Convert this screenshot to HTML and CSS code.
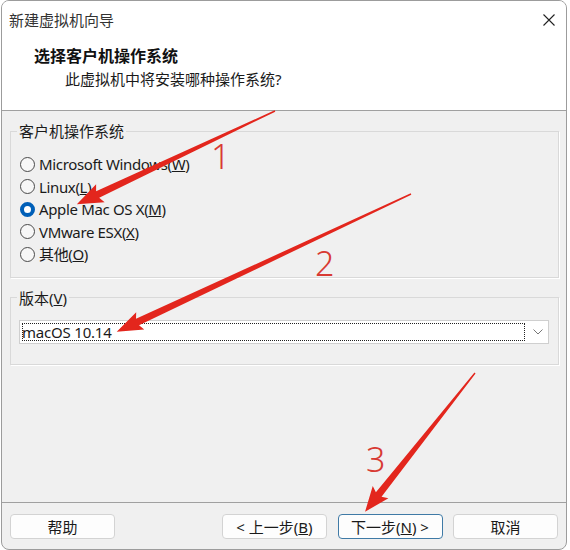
FILE: index.html
```html
<!DOCTYPE html>
<html lang="zh-CN">
<head>
  <meta charset="UTF-8" />
  <title>新建虚拟机向导</title>
  <link rel="stylesheet" href="styles.css">
</head>
<body>
  <div class="window">
    <div class="titlebar">
      <span class="title">新建虚拟机向导</span>
      <svg class="close" width="12" height="12" viewBox="0 0 12 12">
        <path d="M0.5 0.5 L11.5 11.5 M11.5 0.5 L0.5 11.5" stroke="#222" stroke-width="1.1" fill="none" />
      </svg>
    </div>

    <div class="header">
      <h1>选择客户机操作系统</h1>
      <p>此虚拟机中将安装哪种操作系统?</p>
    </div>

    <div class="content">
      <fieldset class="group">
        <legend>客户机操作系统</legend>
        <div class="radio"><span class="dot"></span>Microsoft Windows(<u>W</u>)</div>
        <div class="radio"><span class="dot"></span>Linux(<u>L</u>)</div>
        <div class="radio checked"><span class="dot"></span>Apple Mac OS X(<u>M</u>)</div>
        <div class="radio"><span class="dot"></span>VMware ESX(<u>X</u>)</div>
        <div class="radio"><span class="dot"></span>其他(<u>O</u>)</div>
      </fieldset>

      <fieldset class="group version">
        <legend>版本(<u>V</u>)</legend>
        <div class="combo">
          <span class="combo-value">macOS 10.14</span>
          <svg class="chevron" width="10" height="6" viewBox="0 0 10 6">
            <path d="M0.5 0.5 L5 5 L9.5 0.5" stroke="#777" stroke-width="1" fill="none" />
          </svg>
        </div>
      </fieldset>
    </div>

    <div class="footer">
      <button class="btn">帮助</button>
      <div class="nav">
        <button class="btn">&lt; 上一步(<u>B</u>)</button>
        <button class="btn default">下一步(<u>N</u>) &gt;</button>
        <button class="btn">取消</button>
      </div>
    </div>

    <!-- red annotation arrows drawn over the dialog -->
    <svg class="marks" width="570" height="550" viewBox="0 0 570 550">
      <g fill="#e3261d">
        <polygon transform="translate(275 111) rotate(154.8)" points="0,-0.7 196,-3.6 193,-10 219,0 193,10 196,3.6 0,0.7" />
        <polygon transform="translate(411 194) rotate(154.9)" points="0,-0.7 302,-3.6 299,-9.5 325,0 299,9.5 302,3.6 0,0.7" />
        <polygon transform="translate(475 373) rotate(128.4)" points="0,-0.7 155,-3.6 152,-10 177,0 152,10 155,3.6 0,0.7" />
      </g>
    </svg>
    <span class="num n1">1</span>
    <span class="num n2">2</span>
    <span class="num n3">3</span>
  </div>
</body>
</html>
```

FILE: styles.css
```css
body {
  margin: 0;
  background: #fff;
  font-family: "Noto Sans", "Noto Sans CJK SC", sans-serif;
  font-size: 15px;
  color: #1a1a1a;
}
.window {
  position: relative;
  box-sizing: border-box;
  width: 566px;
  height: 550px;
  margin-left: 1px;
  border: 1px solid #9c9c9c;
  border-radius: 8px;
  overflow: hidden;
  display: flex;
  flex-direction: column;
  background: #f0f0f0;
}
.titlebar {
  height: 38px;
  flex: none;
  display: flex;
  align-items: center;
  justify-content: space-between;
  padding: 0 11px 0 7px;
  background: #fff;
}
.title {
  color: #333;
  line-height: 20px;
}
.header {
  flex: none;
  box-sizing: border-box;
  height: 72px;
  padding: 7px 0 0 32px;
  background: #fff;
  border-bottom: 1px solid #a0a0a0;
}
.header h1 {
  margin: 0;
  font-size: 16px;
  font-weight: bold;
  line-height: 20px;
  color: #111;
}
.header p {
  margin: 3px 0 0 31px;
  line-height: 20px;
}
.content {
  flex: 1;
  padding: 11px 7px 0 8px;
}
.group {
  margin: 0;
  padding: 13px 8px 11px 8px;
  border: 1px solid #d9d9d9;
  box-shadow: 1px 1px 0 #fff;
}
.group legend {
  padding: 0 2px;
  margin-left: -2px;
  line-height: 18px;
}
.radio {
  display: flex;
  align-items: center;
  height: 22.5px;
  line-height: 20px;
  letter-spacing: -0.35px;
  white-space: nowrap;
}
.dot {
  box-sizing: border-box;
  width: 15px;
  height: 15px;
  margin: 0 4px 0 1px;
  border: 1px solid #4a4a4a;
  border-radius: 50%;
  background: #f7f7f7;
  flex: none;
}
.checked .dot {
  border: 4.5px solid #005fb8;
  background: #fff;
}
.version {
  margin-top: 11px;
  padding: 13px 9px 20px 8px;
}
.combo {
  height: 24px;
  box-sizing: border-box;
  display: flex;
  align-items: center;
  justify-content: space-between;
  padding: 2px 5px 2px 2px;
  background: #fff;
  border: 1px solid #cfcfcf;
}
.combo-value {
  flex: 1;
  height: 18px;
  line-height: 18px;
  margin-right: 8px;
  letter-spacing: -0.2px;
  outline: 1px dotted #222;
  outline-offset: -1px;
}
.chevron {
  margin-top: 1px;
}
.footer {
  flex: none;
  height: 47px;
  box-sizing: border-box;
  display: flex;
  justify-content: space-between;
  padding: 11px 8px 0 8px;
  border-top: 1px solid #a0a0a0;
}
.nav {
  display: flex;
  gap: 10.5px;
}
.btn {
  width: 105px;
  height: 25px;
  padding: 0;
  font: inherit;
  line-height: 20px;
  color: #1a1a1a;
  background: #fdfdfd;
  border: 1px solid #d3d3d3;
  border-radius: 4px;
}
.btn.default {
  border-color: #3f7aa6;
}
.marks {
  position: absolute;
  left: -2px;
  top: -1px;
  pointer-events: none;
}
.num {
  position: absolute;
  font-size: 34px;
  line-height: 34px;
  font-weight: 300;
  color: #d83a33;
}
.n1 { left: 209px; top: 138px; }
.n2 { left: 313px; top: 245px; }
.n3 { left: 364px; top: 441px; }
```
